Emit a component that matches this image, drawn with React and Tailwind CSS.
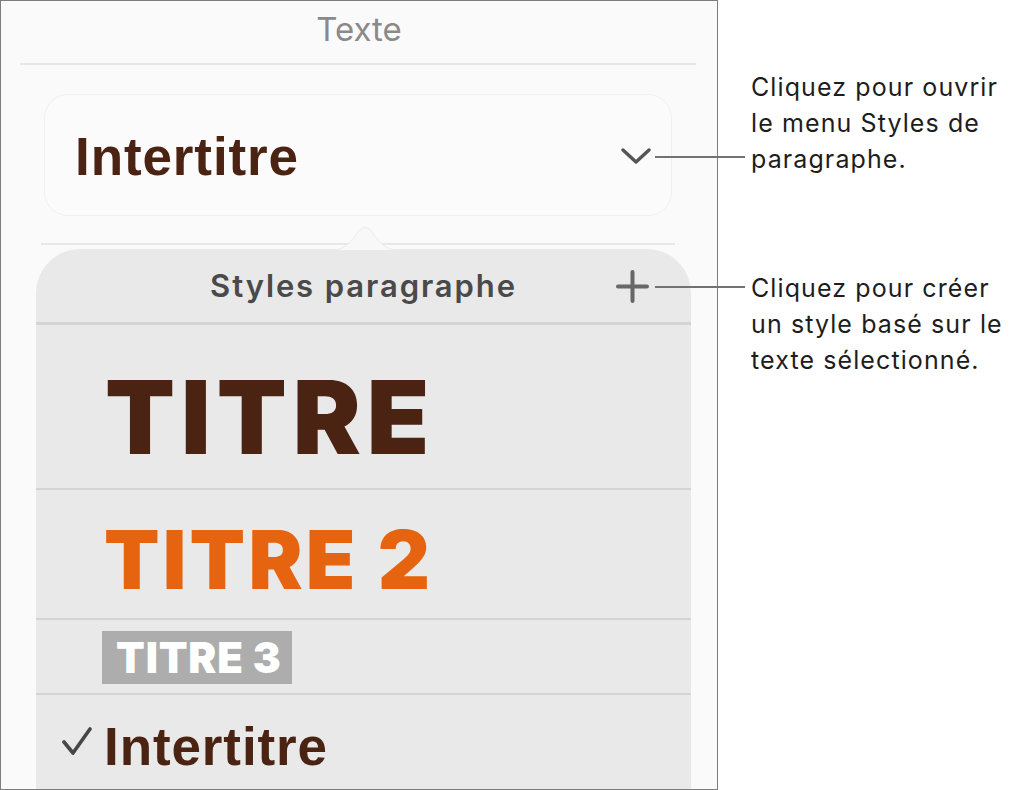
import React from 'react';

const ui = { fontFamily: 'Inter, "Noto Sans", sans-serif' };
const heavy = { fontFamily: '"Liberation Sans", Arial, sans-serif' };
const black = { fontFamily: 'Inter, "Liberation Sans", sans-serif' };

function Chevron() {
  return (
    <svg width="30" height="17" viewBox="0 0 30 17" fill="none">
      <polyline points="2,2 15,14 28,2" stroke="#555555" strokeWidth="3.4" strokeLinecap="round" strokeLinejoin="round" />
    </svg>
  );
}

function Plus() {
  return (
    <svg width="33" height="33" viewBox="0 0 33 33" fill="none">
      <path d="M16.5 2 V31 M2 16.5 H31" stroke="#676767" strokeWidth="4" strokeLinecap="round" />
    </svg>
  );
}

function Check() {
  return (
    <svg width="30" height="29" viewBox="0 0 30 29" fill="none">
      <polyline points="2,15 11,26 28,2" stroke="#474747" strokeWidth="3.6" strokeLinecap="round" strokeLinejoin="round" />
    </svg>
  );
}

export default function App() {
  return (
    <div className="relative flex w-[1011px] h-[790px] bg-white overflow-hidden">
      {/* panneau inspecteur */}
      <div className="w-[718px] h-[790px] shrink-0 border-[1.5px] border-[#7d7d7d] bg-[#fafafa] flex flex-col overflow-hidden">
        <div className="h-[62px] pt-[12px] flex justify-center">
          <span className="text-[33px] leading-none text-[#8a8a8a]" style={ui}>Texte</span>
        </div>
        <div className="h-[2px] ml-[19px] w-[676px] bg-[#e7e7e7]" />

        <div className="mt-[29px] ml-[43px] w-[628px] h-[122px] rounded-[24px] border border-[#f0f0f0] bg-[#fbfbfb] flex items-center justify-between pl-[30px] pr-[20px] pt-[3px]">
          <span className="text-[53px] leading-none font-bold tracking-[0.9px] text-[#4a2313]" style={heavy}>Intertitre</span>
          <Chevron />
        </div>

        <div className="mt-[27px] ml-[40px] w-[634px] h-[2px] bg-[#e7e7e7]" />

        {/* menu Styles paragraphe */}
        <div className="mt-[4px] ml-[35px] w-[655px] flex-1 rounded-t-[44px] bg-[#e9e9e9] flex flex-col">
          <div className="h-[73px] grid grid-cols-[1fr_auto_1fr] items-start">
            <div />
            <span className="pt-[21px] text-[31px] leading-none font-semibold tracking-[1.9px] text-[#4a4a4a]" style={ui}>Styles paragraphe</span>
            <div className="flex justify-end pr-[42px] pt-[21px]">
              <Plus />
            </div>
          </div>
          <div className="h-[3px] bg-[#d4d4d4]" />

          <div className="h-[163px] pl-[69px] pt-[41px]">
            <span className="text-[102px] leading-none font-black tracking-[6px] text-[#4a2313]" style={black}>TITRE</span>
          </div>
          <div className="h-[2px] bg-[#d4d4d4]" />

          <div className="h-[128px] pl-[68px] pt-[30px]">
            <span className="text-[81px] leading-none font-black tracking-[3.2px] text-[#e6640f]" style={black}>TITRE 2</span>
          </div>
          <div className="h-[2px] bg-[#d4d4d4]" />

          <div className="h-[73px] pl-[66px] pt-[11px]">
            <span className="inline-block bg-[#adadad] pl-[14px] pr-[10px] pt-[6px] pb-[5px] text-[42px] leading-none font-black tracking-[0.8px] text-white" style={black}>TITRE 3</span>
          </div>
          <div className="h-[2px] bg-[#d4d4d4]" />

          <div className="flex items-start pl-[26px] pt-[25px] gap-[12px]">
            <div className="pt-[7px]">
              <Check />
            </div>
            <span className="text-[53px] leading-none font-bold tracking-[0.9px] text-[#4a2313]" style={heavy}>Intertitre</span>
          </div>
        </div>
      </div>

      {/* légendes */}
      <div className="pl-[33px] flex flex-col text-[25px] leading-[36px] tracking-[1.1px] text-[#1d1d1d]" style={ui}>
        <p className="mt-[69px]">Cliquez pour ouvrir<br />le menu Styles de<br />paragraphe.</p>
        <p className="mt-[93px]">Cliquez pour créer<br />un style basé sur le<br />texte sélectionné.</p>
      </div>

      {/* traits de rappel */}
      <div className="absolute left-[655px] top-[156px] w-[90px] h-[2px] bg-[#727272]" />
      <div className="absolute left-[655px] top-[286px] w-[90px] h-[2px] bg-[#727272]" />

      {/* flèche du menu */}
      <svg className="absolute left-[328px] top-[220px]" width="74" height="32" viewBox="0 0 74 32">
        <path d="M0 31 C14 31 22 24 30 12 C34 6 40 6 44 12 C52 24 60 31 74 31 Z" fill="#f8f8f8" stroke="#ececec" strokeWidth="1" />
        <rect x="0" y="30" width="74" height="2" fill="#e9e9e9" />
      </svg>
    </div>
  );
}
